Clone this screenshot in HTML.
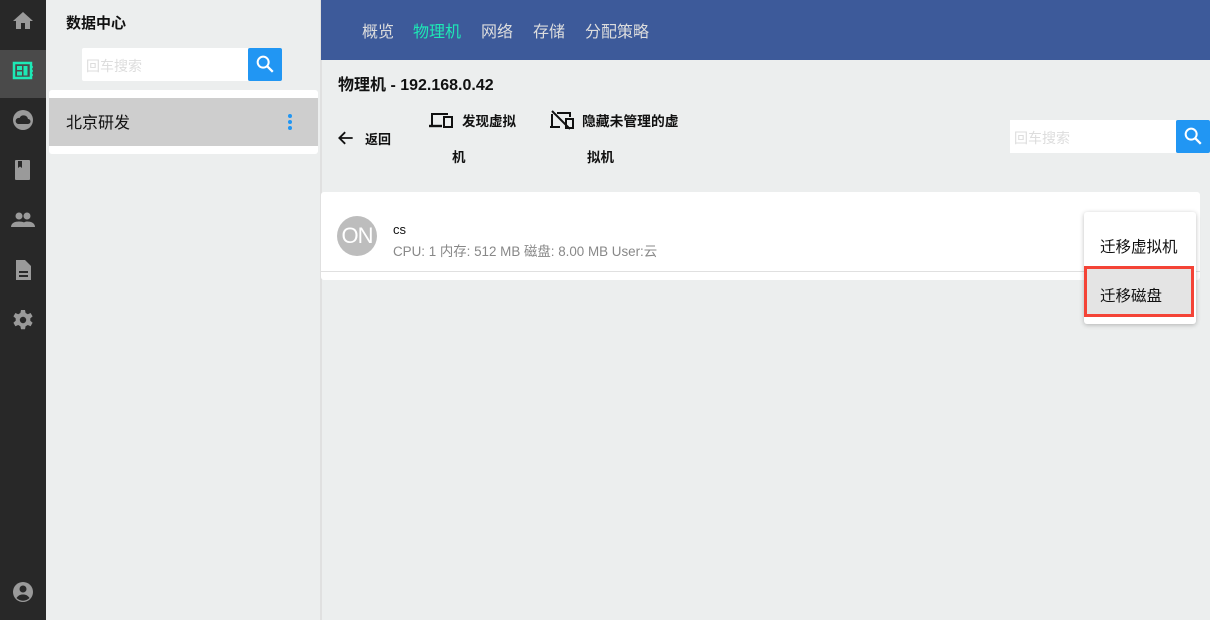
<!DOCTYPE html>
<html><head><meta charset="utf-8"><style>
*{margin:0;padding:0;box-sizing:border-box}
body{width:1210px;height:620px;overflow:hidden;background:#eceeee;font-family:"Liberation Sans","Noto Sans CJK SC",sans-serif;position:relative;color:#111}
.a{position:absolute}
.nav{left:0;top:0;width:46px;height:620px;background:#282828}
.ic{position:absolute;left:11px;width:24px;height:24px}
</style></head><body>
<div class="a nav">
 <div class="a" style="left:0;top:50px;width:46px;height:48px;background:#4a4a4a"></div>
 <svg class="ic" style="top:9px" viewBox="0 0 24 24"><path fill="#9a9a9a" d="M10 20v-6h4v6h5v-8h3L12 3 2 12h3v8z"/></svg>
 <svg class="ic" style="top:59px" viewBox="0 0 24 24"><rect x="3" y="4" width="17" height="15" fill="none" stroke="#1de9b6" stroke-width="2.5"/><rect x="6" y="7" width="5" height="4" fill="#1de9b6"/><rect x="6" y="12.5" width="5" height="4" fill="#1de9b6"/><rect x="12.5" y="7" width="4" height="9.5" fill="#1de9b6"/><path d="M20 8h2M20 12h2M20 16h2" stroke="#1de9b6" stroke-width="1.5"/></svg>
 <svg class="ic" style="top:108px" viewBox="0 0 24 24"><circle cx="12" cy="12" r="10" fill="#9a9a9a"/><path fill="#282828" d="M7 16h10a2.5 2.5 0 0 0 0-5 4.5 4.5 0 0 0-8.5-1A3 3 0 0 0 7 16z"/></svg>
 <svg class="ic" style="top:158px" viewBox="0 0 24 24"><rect x="4" y="2" width="15" height="20" rx="1" fill="#9a9a9a"/><path fill="#282828" d="M7 3h4v7l-2-1.5L7 10z"/></svg>
 <svg class="ic" style="top:208px" viewBox="0 0 24 24"><circle cx="8" cy="8" r="3.5" fill="#9a9a9a"/><circle cx="16" cy="8" r="3.5" fill="#9a9a9a"/><path fill="#9a9a9a" d="M0 19c0-4 4-5.5 8-5.5s8 1.5 8 5.5zM10 19c0-3 3-5.5 6-5.5 4 0 8 1.5 8 5.5z"/></svg>
 <svg class="ic" style="top:258px" viewBox="0 0 24 24"><path fill="#9a9a9a" d="M5 2h9l6 6v14H5z"/><path stroke="#282828" stroke-width="2" d="M8 14h9M8 18h9"/></svg>
 <svg class="ic" style="top:308px" viewBox="0 0 24 24"><path fill="#9a9a9a" d="M10 2h4l.6 3 2.2 1.2 2.8-1.2 2 3.4-2.3 2v2.4l2.3 2-2 3.4-2.8-1.2-2.2 1.2-.6 3h-4l-.6-3-2.2-1.2-2.8 1.2-2-3.4 2.3-2v-2.4l-2.3-2 2-3.4 2.8 1.2L9.4 5z"/><circle cx="12" cy="12" r="3.2" fill="#282828"/></svg>
 <svg class="ic" style="top:580px" viewBox="0 0 24 24"><circle cx="12" cy="12" r="10" fill="#9a9a9a"/><circle cx="12" cy="9" r="3.5" fill="#282828"/><path fill="#282828" d="M5.5 18c2-3 4-3.5 6.5-3.5s4.5.5 6.5 3.5a9 9 0 0 1-13 0z"/></svg>
</div>
<div class="a" style="left:320px;top:0;width:2px;height:620px;background:#e0e0e0"></div>
<div class="a" style="left:66px;top:12px;font-size:15px;font-weight:bold">数据中心</div>
<div class="a" style="left:82px;top:48px;width:166px;height:33px;background:#fff;border-radius:2px 0 0 2px;font-size:14px;color:#ddd;padding:8px 4px">回车搜索</div>
<div class="a" style="left:248px;top:48px;width:34px;height:33px;background:#2196f3;border-radius:2px"><svg style="position:absolute;left:6px;top:5px" width="22" height="22" viewBox="0 0 24 24"><circle cx="10" cy="10" r="6" fill="none" stroke="#fff" stroke-width="2.2"/><path d="M14.5 14.5l6 6" stroke="#fff" stroke-width="2.5"/></svg></div>
<div class="a" style="left:49px;top:90px;width:269px;height:64px;background:#fff;border-radius:3px"></div>
<div class="a" style="left:49px;top:98px;width:269px;height:48px;background:#cecece"></div>
<div class="a" style="left:66px;top:114px;font-size:16px;line-height:20px">北京研发</div>
<div class="a" style="left:288px;top:114px;width:4px;height:16px"><div style="width:4px;height:4px;border-radius:2px;background:#2196f3;margin-bottom:2px"></div><div style="width:4px;height:4px;border-radius:2px;background:#2196f3;margin-bottom:2px"></div><div style="width:4px;height:4px;border-radius:2px;background:#2196f3"></div></div>

<div class="a" style="left:321px;top:0;width:889px;height:60px;background:#3d5a9a"></div>
<div class="a" style="left:362px;top:18px;font-size:16px;color:#ddd">概览</div>
<div class="a" style="left:413px;top:18px;font-size:16px;color:#1de9b6">物理机</div>
<div class="a" style="left:481px;top:18px;font-size:16px;color:#ddd">网络</div>
<div class="a" style="left:533px;top:18px;font-size:16px;color:#ddd">存储</div>
<div class="a" style="left:585px;top:18px;font-size:16px;color:#ddd">分配策略</div>

<div class="a" style="left:338px;top:71px;font-size:16px;font-weight:bold">物理机 - 192.168.0.42</div>
<svg class="a" style="left:336px;top:128px" width="20" height="20" viewBox="0 0 24 24"><path d="M20 12H5M11 5l-7 7 7 7" fill="none" stroke="#111" stroke-width="2.2"/></svg>
<div class="a" style="left:365px;top:129px;font-size:13px;font-weight:bold">返回</div>
<svg class="a" style="left:429px;top:110px" width="25" height="20" viewBox="0 0 25 20"><path d="M3 16V4h16" fill="none" stroke="#111" stroke-width="2"/><path d="M0 16h13" stroke="#111" stroke-width="2.4"/><rect x="15" y="7" width="8" height="10" fill="none" stroke="#111" stroke-width="2"/></svg>
<div class="a" style="left:462px;top:110px;font-size:13.5px;font-weight:bold">发现虚拟</div>
<div class="a" style="left:452px;top:146px;font-size:13.5px;font-weight:bold">机</div>
<svg class="a" style="left:549px;top:109px" width="26" height="22" viewBox="0 0 26 22"><path d="M3 2l18 18" stroke="#111" stroke-width="2"/><path d="M3 5v13M1 18h10M8 4h13v4" fill="none" stroke="#111" stroke-width="2"/><rect x="17" y="10" width="7" height="9" fill="none" stroke="#111" stroke-width="2"/></svg>
<div class="a" style="left:582px;top:110px;font-size:13.8px;font-weight:bold">隐藏未管理的虚</div>
<div class="a" style="left:587px;top:146px;font-size:13.5px;font-weight:bold">拟机</div>
<div class="a" style="left:1010px;top:120px;width:166px;height:33px;background:#fff;font-size:14px;color:#ddd;padding:8px 4px">回车搜索</div>
<div class="a" style="left:1176px;top:120px;width:34px;height:33px;background:#2196f3;border-radius:2px"><svg style="position:absolute;left:6px;top:5px" width="22" height="22" viewBox="0 0 24 24"><circle cx="10" cy="10" r="6" fill="none" stroke="#fff" stroke-width="2.2"/><path d="M14.5 14.5l6 6" stroke="#fff" stroke-width="2.5"/></svg></div>

<div class="a" style="left:321px;top:192px;width:879px;height:88px;background:#fff;border-radius:3px"></div>
<div class="a" style="left:321px;top:271px;width:879px;height:1px;background:#e0e0e0"></div>
<div class="a" style="left:337px;top:216px;width:40px;height:40px;border-radius:20px;background:#bdbdbd;color:#fff;font-size:22px;line-height:40px;text-align:center;letter-spacing:-1px">ON</div>
<div class="a" style="left:393px;top:222px;font-size:13px">cs</div>
<div class="a" style="left:393px;top:240px;font-size:13.4px;color:#888">CPU: 1 内存: 512 MB 磁盘: 8.00 MB User:云</div>

<div class="a" style="left:1084px;top:212px;width:112px;height:112px;background:#fff;border-radius:3px;box-shadow:0 1px 5px rgba(0,0,0,.25)"></div>
<div class="a" style="left:1100px;top:235px;font-size:15.5px">迁移虚拟机</div>
<div class="a" style="left:1084px;top:266px;width:110px;height:51px;background:#e4e4e4;border:3px solid #f44336"></div>
<div class="a" style="left:1100px;top:284px;font-size:15.5px">迁移磁盘</div>
</body></html>
